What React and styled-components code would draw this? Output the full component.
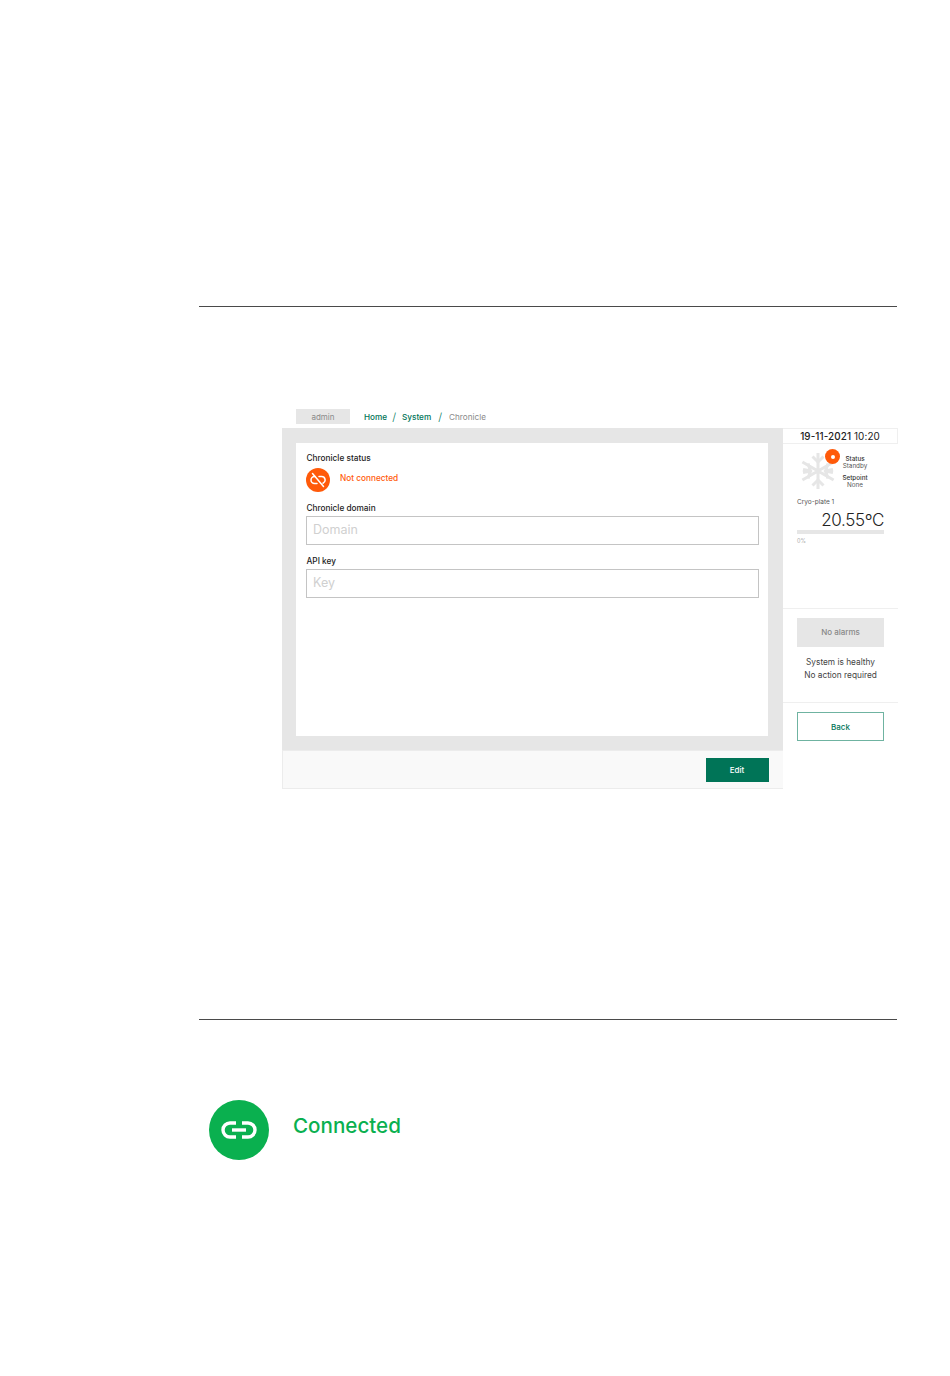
import React from "react";
import styled, { createGlobalStyle } from "styled-components";

const Global = createGlobalStyle`
  html, body { margin: 0; padding: 0; background: #fff; }
  body { font-family: Inter, "Liberation Sans", sans-serif; color: #222; }
`;

const Page = styled.div`
  width: 950px;
  height: 1376px;
  padding: 306px 0 0 199px;
  box-sizing: border-box;
  overflow: hidden;
`;
const Rule = styled.div`
  width: 698px;
  height: 1px;
  background: #4a4a4a;
`;
const Screen = styled.div`
  width: 616px;
  margin: 102px 0 0 83px;
  height: 610px;
`;
const TopBar = styled.div`
  height: 19px;
  display: flex;
  align-items: flex-start;
  padding-left: 14px;
`;
const UserChip = styled.div`
  width: 54px;
  height: 15px;
  background: #e6e6e6;
  color: #8a8a8a;
  font-size: 8px;
  line-height: 16px;
  text-align: center;
`;
const Crumbs = styled.nav`
  display: flex;
  align-items: center;
  height: 15px;
  margin-left: 14px;
  font-size: 8.2px;
`;
const Crumb = styled.span`
  color: ${(p) => (p.$current ? "#8a8a8a" : "#007457")};
  font-weight: ${(p) => (p.$current ? 400 : 500)};
`;
const Slash = styled.span`
  color: #007457;
  font-size: 11px;
  font-weight: 300;
  margin: 0 ${(p) => p.$right}px 0 ${(p) => p.$left}px;
`;
const Columns = styled.div`
  display: grid;
  grid-template-columns: 501px 115px;
`;
const Main = styled.div`
  display: flex;
  flex-direction: column;
  height: 361px;
`;
const Stage = styled.div`
  height: 322px;
  background: #e6e6e6;
  padding: 15px 15px 14px 14px;
  box-sizing: border-box;
`;
const Card = styled.div`
  background: #fff;
  height: 100%;
  padding: 10px 10px 0;
  box-sizing: border-box;
`;
const Label = styled.div`
  font-size: 8.25px;
  line-height: 10px;
  font-weight: 500;
  color: #222;
  padding-left: 0.5px;
`;
const StatusRow = styled.div`
  display: flex;
  align-items: flex-start;
  gap: 10px;
  margin: 5px 0 11px;
`;
const StatusDot = styled.div`
  width: 24px;
  height: 24px;
  border-radius: 50%;
  background: #ff5a0a;
  display: flex;
  align-items: center;
  justify-content: center;
  color: #fff;
`;
const StatusText = styled.div`
  color: #ff5a0a;
  font-size: 8.25px;
  line-height: 10px;
  font-weight: 500;
  margin-top: 5px;
`;
const Field = styled.div`
  height: 29px;
  width: 453px;
  box-sizing: border-box;
  margin: 3px 0 11px;
  border: 1px solid #c4c4c4;
  padding-left: 6px;
  color: #d0d0d0;
  font-size: 12.5px;
  line-height: 25px;
`;
const Footer = styled.div`
  height: 39px;
  background: #f9f9f9;
  border: solid #ececec;
  border-width: 1px 0 1px 1px;
  box-sizing: border-box;
  display: flex;
  justify-content: flex-end;
  padding: 7px 14.500px 0 0;
`;
const EditButton = styled.div`
  width: 63px;
  height: 24px;
  background: #007457;
  color: #fff;
  font-size: 8px;
  font-weight: 500;
  line-height: 24px;
  text-align: center;
`;
const Side = styled.aside`
  display: flex;
  flex-direction: column;
`;
const Clock = styled.div`
  height: 16px;
  box-sizing: border-box;
  border: solid #efefef;
  border-width: 1px 1px 1px 0;
  font-size: 9.9px;
  line-height: 15px;
  text-align: center;
  color: #222;
  letter-spacing: 0.1px;
  b { font-weight: 500; }
`;
const CryoPanel = styled.div`
  height: 165px;
  box-sizing: border-box;
  padding: 0 14px;
  border-bottom: 1px solid #efefef;
`;
const CryoTop = styled.div`
  position: relative;
  height: 54px;
  display: flex;
`;
const Flake = styled.div`
  width: 36px;
  margin: 9px 0 0 2.500px;
  color: #e6e6e6;
`;
const Badge = styled.div`
  position: absolute;
  left: 28px;
  top: 5px;
  width: 15px;
  height: 15px;
  border-radius: 50%;
  background: #ff5a0a;
  display: flex;
  align-items: center;
  justify-content: center;
  &::after {
    content: "";
    width: 4px;
    height: 4px;
    border-radius: 50%;
    background: #fff;
  }
`;
const States = styled.div`
  margin: 12px 0 0 -0.500px;
  width: 40px;
  text-align: center;
  font-size: 6.3px;
  line-height: 7px;
  color: #555;
`;
const StateName = styled.div`
  font-weight: 500;
  color: #333;
  margin-top: ${(p) => p.$gap || 0}px;
`;
const Cryo = styled.div`
  font-size: 6.5px;
  line-height: 8px;
  color: #555;
`;
const Temp = styled.div`
  font-size: 17px;
  line-height: 20px;
  text-align: right;
  color: #222;
  margin-top: 4px;
  letter-spacing: -0.3px;
  font-weight: 300;
`;
const Meter = styled.div`
  height: 4px;
  background: #e6e6e6;
  margin-top: 0;
`;
const Percent = styled.div`
  font-size: 5.5px;
  line-height: 8px;
  margin-top: 3px;
  color: #aaa;
`;
const AlarmPanel = styled.div`
  height: 94px;
  box-sizing: border-box;
  padding: 9px 14px 0;
  border-bottom: 1px solid #efefef;
`;
const AlarmBox = styled.div`
  height: 29px;
  background: #e6e6e6;
  color: #888;
  font-size: 8px;
  font-weight: 500;
  line-height: 29px;
  text-align: center;
`;
const AlarmText = styled.div`
  margin-top: 9px;
  font-size: 8.3px;
  line-height: 13px;
  text-align: center;
  color: #444;
`;
const BackPanel = styled.div`
  padding: 9px 14px 0;
`;
const BackButton = styled.div`
  height: 29px;
  box-sizing: border-box;
  border: 1px solid #6fb3a1;
  color: #007457;
  font-size: 8px;
  font-weight: 500;
  line-height: 28px;
  text-align: center;
`;
const LinkRow = styled.div`
  display: flex;
  align-items: flex-start;
  margin: 80px 0 0 10px;
  gap: 24px;
`;
const LinkDot = styled.div`
  width: 60px;
  height: 60px;
  border-radius: 50%;
  background: #0ab04f;
  display: flex;
  align-items: center;
  justify-content: center;
  color: #fff;
`;
const LinkText = styled.div`
  color: #0ab04f;
  font-size: 20.6px;
  line-height: 26px;
  font-weight: 500;
  margin-top: 13px;
`;

const LinkIcon = () => (
  <svg width="36" height="18" viewBox="0 0 36 18" fill="none" stroke="currentColor" strokeWidth="3.4">
    <path d="M15 2H9a7 7 0 0 0 0 14h6" />
    <path d="M21 2h6a7 7 0 0 1 0 14h-6" />
    <path d="M11 9h14" />
  </svg>
);
const BrokenLinkIcon = () => (
  <svg width="16" height="16" viewBox="0 0 16 16" fill="none" stroke="currentColor" strokeWidth="1.5" strokeLinecap="round">
    <path d="M5 4.500H4.500a3.500 3.500 0 0 0 0 7H7" />
    <path d="M9 4.500h2.500a3.500 3.500 0 0 1 1.500 6.700" />
    <path d="M2.500 1.500l11 13" />
  </svg>
);
const SnowIcon = () => (
  <svg width="36" height="36" viewBox="0 0 36 36" fill="none" stroke="currentColor" strokeWidth="3">
    <path d="M18 0v36M2.400 9l31.200 18M2.400 27l31.200-18" />
    <path d="M12.500 3.500l5.500 5.500 5.500-5.500M12.500 32.500l5.500-5.500 5.500 5.500M3 16.500l7.500 1.500-2.500 7.500M33 19.500L25.500 18l2.500-7.500M3 19.500l7.500-1.500-2.500-7.500M33 16.500L25.500 18l2.500 7.500" />
  </svg>
);

export default function App() {
  return (
    <Page>
      <Global />
      <Rule />
      <Screen>
        <TopBar>
          <UserChip>admin</UserChip>
          <Crumbs>
            <Crumb>Home</Crumb>
            <Slash $left={5} $right={6}>/</Slash>
            <Crumb>System</Crumb>
            <Slash $left={7} $right={7}>/</Slash>
            <Crumb $current>Chronicle</Crumb>
          </Crumbs>
        </TopBar>
        <Columns>
          <Main>
            <Stage>
              <Card>
                <Label>Chronicle status</Label>
                <StatusRow>
                  <StatusDot><BrokenLinkIcon /></StatusDot>
                  <StatusText>Not connected</StatusText>
                </StatusRow>
                <Label>Chronicle domain</Label>
                <Field>Domain</Field>
                <Label>API key</Label>
                <Field>Key</Field>
              </Card>
            </Stage>
            <Footer><EditButton>Edit</EditButton></Footer>
          </Main>
          <Side>
            <Clock><b>19-11-2021</b> 10:20</Clock>
            <CryoPanel>
              <CryoTop>
                <Flake><SnowIcon /></Flake>
                <Badge />
                <States>
                  <StateName>Status</StateName>
                  Standby
                  <StateName $gap={5}>Setpoint</StateName>
                  None
                </States>
              </CryoTop>
              <Cryo>Cryo-plate 1</Cryo>
              <Temp>20.55ºC</Temp>
              <Meter />
              <Percent>0%</Percent>
            </CryoPanel>
            <AlarmPanel>
              <AlarmBox>No alarms</AlarmBox>
              <AlarmText>System is healthy<br />No action required</AlarmText>
            </AlarmPanel>
            <BackPanel><BackButton>Back</BackButton></BackPanel>
          </Side>
        </Columns>
      </Screen>
      <Rule />
      <LinkRow>
        <LinkDot><LinkIcon /></LinkDot>
        <LinkText>Connected</LinkText>
      </LinkRow>
    </Page>
  );
}
